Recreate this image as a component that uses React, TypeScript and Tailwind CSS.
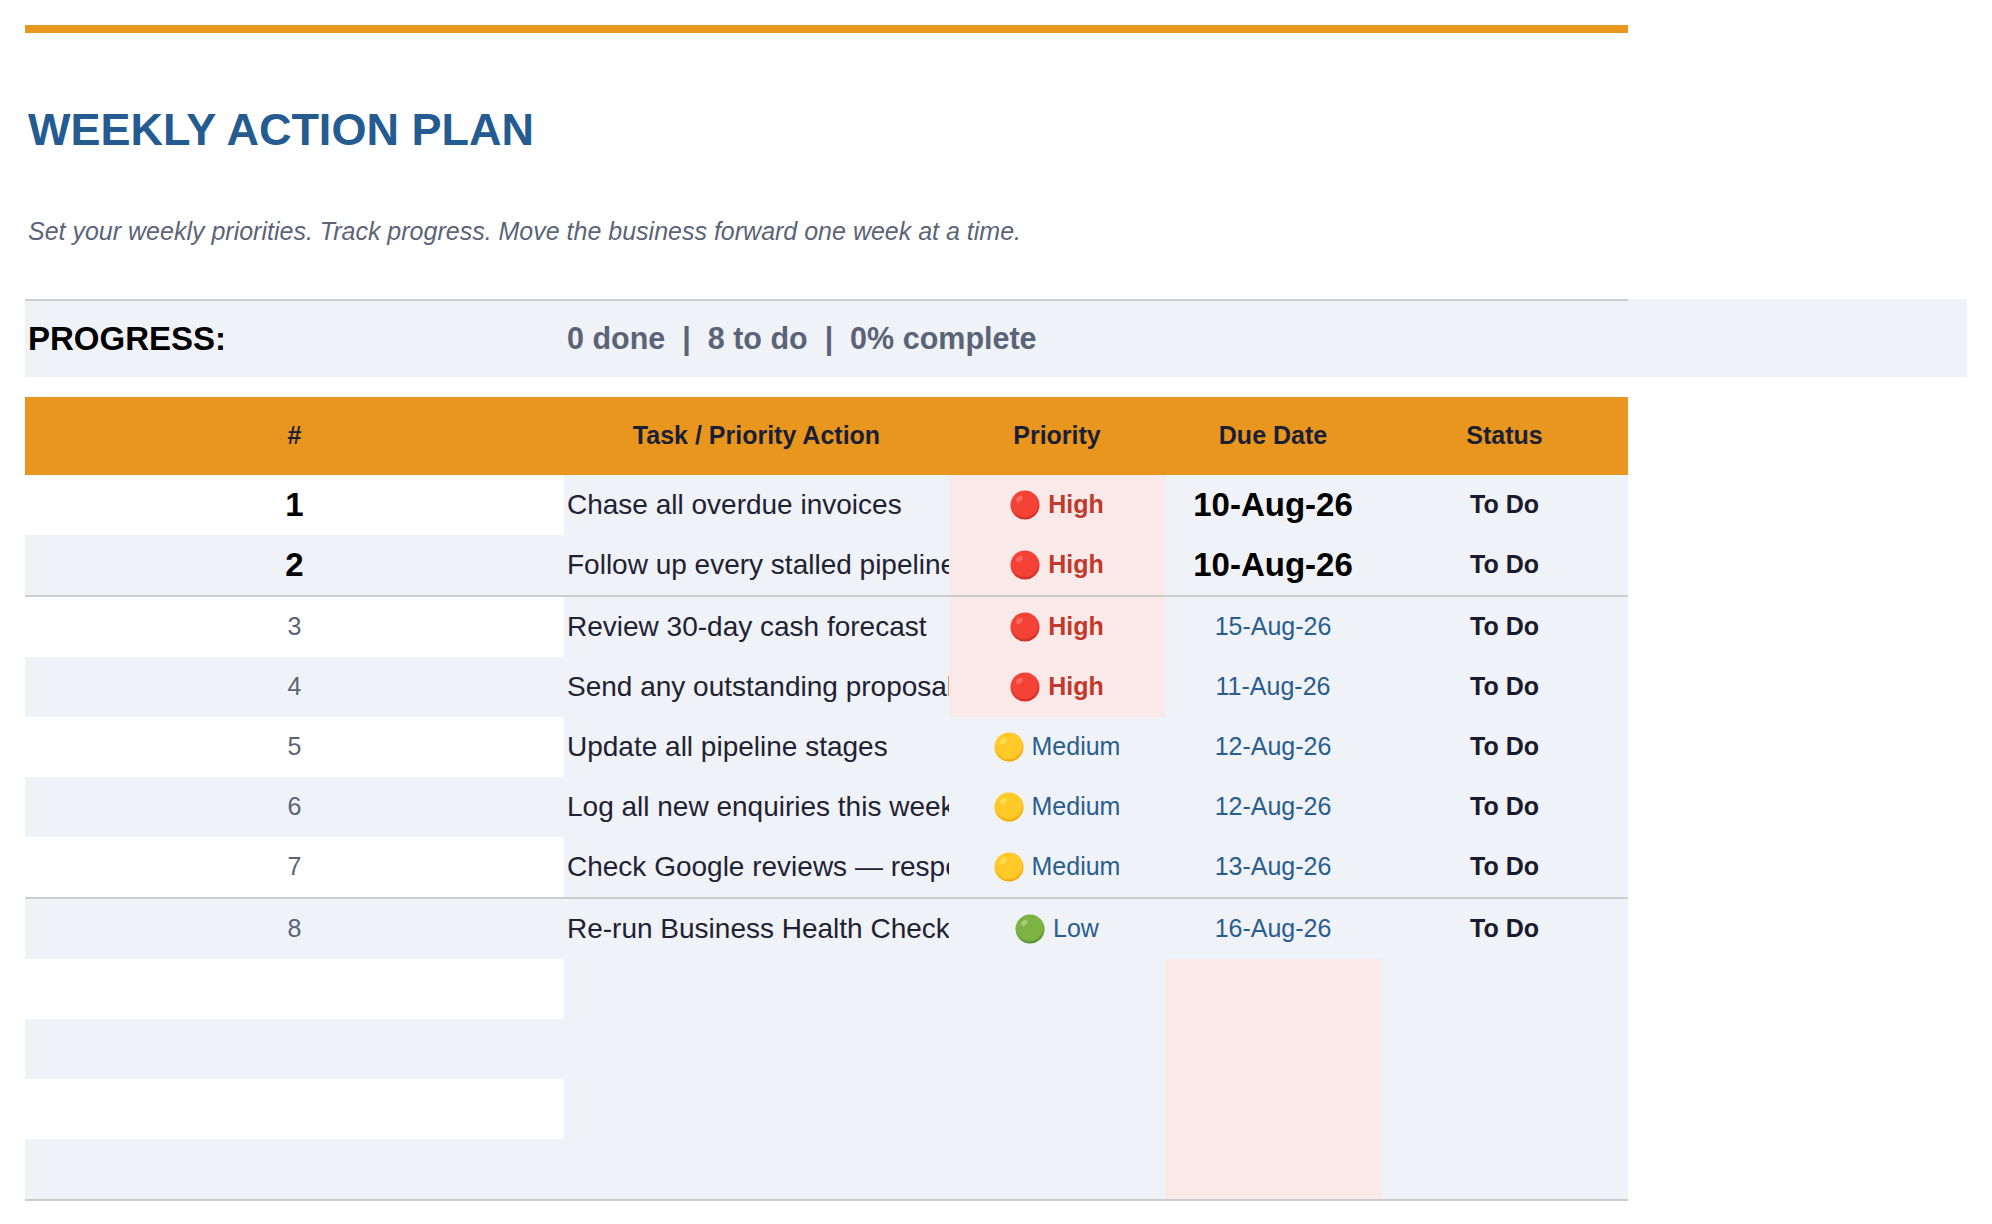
import React from "react";

type Level = "High" | "Medium" | "Low";

const DOT: Record<Level, { id: string; hi: string; base: string; dark: string }> = {
  High: { id: "dot-red", hi: "#FF8A80", base: "#F44336", dark: "#C62828" },
  Medium: { id: "dot-yellow", hi: "#FFF176", base: "#FFCA28", dark: "#F29E00" },
  Low: { id: "dot-green", hi: "#C5E1A5", base: "#7CB342", dark: "#4E8A2A" },
};

function Dot({ level }: { level: Level }) {
  const d = DOT[level];
  return (
    <svg width="30" height="30" viewBox="0 0 32 32" className="shrink-0">
      <defs>
        <radialGradient id={d.id} cx="48%" cy="42%" r="58%">
          <stop offset="0%" stopColor={d.base} />
          <stop offset="78%" stopColor={d.base} />
          <stop offset="100%" stopColor={d.dark} />
        </radialGradient>
      </defs>
      <circle cx="16" cy="16" r="15.5" fill={`url(#${d.id})`} />
      <ellipse cx="10" cy="9.5" rx="4" ry="2.6" fill={d.hi} opacity="0.55" transform="rotate(-40 10 9.5)" />
    </svg>
  );
}

type Row = { n: number; task: string; level: Level; date: string };

const rows: Row[] = [
  { n: 1, task: "Chase all overdue invoices", level: "High", date: "10-Aug-26" },
  { n: 2, task: "Follow up every stalled pipeline deal", level: "High", date: "10-Aug-26" },
  { n: 3, task: "Review 30-day cash forecast", level: "High", date: "15-Aug-26" },
  { n: 4, task: "Send any outstanding proposals", level: "High", date: "11-Aug-26" },
  { n: 5, task: "Update all pipeline stages", level: "Medium", date: "12-Aug-26" },
  { n: 6, task: "Log all new enquiries this week", level: "Medium", date: "12-Aug-26" },
  { n: 7, task: "Check Google reviews — respond to all", level: "Medium", date: "13-Aug-26" },
  { n: 8, task: "Re-run Business Health Check", level: "Low", date: "16-Aug-26" },
];

const GRID = "grid grid-cols-[539px_385px_216px_216px_247px]";

export default function App() {
  return (
    <div className="min-h-screen bg-white font-['Liberation_Sans',Arial,sans-serif]">
      <div className="pl-[25px] pt-[25px]">
        <div className="h-[8px] w-[1603px] bg-[#E8961E]" />
        <h1 className="mt-[75px] pl-[3px] text-[45px] leading-[44px] font-bold text-[#245C91]">
          WEEKLY ACTION PLAN
        </h1>
        <p className="mt-[67px] pl-[3px] text-[25px] leading-[25px] italic text-[#5B6477]">
          Set your weekly priorities. Track progress. Move the business forward one week at a time.
        </p>

        {/* Progress band */}
        <div className="mt-[55px] flex">
          <div className="flex h-[78px] w-[1603px] items-center border-t-2 border-[#CCCCCC] bg-[#EFF2F7]">
            <div className="w-[539px] pl-[3px] text-[33px] font-bold text-black">PROGRESS:</div>
            <div className="whitespace-pre pl-[3px] text-[30.5px] font-bold text-[#5B6477]">
              {"0 done  |  8 to do  |  0% complete"}
            </div>
          </div>
          <div className="h-[78px] w-[339px] bg-[#EFF2F7]" />
        </div>

        {/* Table */}
        <div className="mt-[20px] w-[1603px]">
          <div className={`${GRID} h-[78px] items-center bg-[#E8961E] text-[25px] font-bold text-[#1B1F36]`}>
            <div className="text-center">#</div>
            <div className="text-center">Task / Priority Action</div>
            <div className="text-center">Priority</div>
            <div className="text-center">Due Date</div>
            <div className="text-center">Status</div>
          </div>

          {rows.map((r, i) => {
            const bold = i < 2;
            const border = i === 1 || i === 6;
            return (
              <div
                key={r.n}
                className={`${GRID} h-[60px] ${border ? "box-content border-b-2 border-[#CCCCCC]" : ""}`}
              >
                <div
                  className={`flex items-center justify-center ${i % 2 === 0 ? "bg-white" : "bg-[#EFF2F7]"} ${
                    bold ? "text-[33px] font-bold text-black" : "text-[25px] text-[#5B6477]"
                  }`}
                >
                  {r.n}
                </div>
                <div className="flex items-center overflow-hidden whitespace-nowrap bg-[#EFF2F7] pl-[3px] text-[28px] text-[#1F2233]">
                  {r.task}
                </div>
                <div
                  className={`flex items-center justify-center gap-[8px] ${
                    r.level === "High" ? "bg-[#FAE9E9]" : "bg-[#EFF2F7]"
                  } text-[25px]`}
                >
                  <Dot level={r.level} />
                  <span
                    className={
                      r.level === "High" ? "font-bold text-[#C0392B]" : "text-[#2A5D8F]"
                    }
                  >
                    {r.level}
                  </span>
                </div>
                <div
                  className={`flex items-center justify-center bg-[#EFF2F7] ${
                    bold ? "text-[33px] font-bold text-black" : "text-[25px] text-[#2A5D8F]"
                  }`}
                >
                  {r.date}
                </div>
                <div className="flex items-center justify-center bg-[#EFF2F7] text-[25px] font-bold text-[#1A1A2E]">
                  To Do
                </div>
              </div>
            );
          })}

          {[0, 1, 2, 3].map((k) => (
            <div
              key={`e${k}`}
              className={`${GRID} h-[60px] ${k === 3 ? "box-content border-b-2 border-[#CCCCCC]" : ""}`}
            >
              <div className={k % 2 === 0 ? "bg-white" : "bg-[#EFF2F7]"} />
              <div className="bg-[#EFF2F7]" />
              <div className="bg-[#EFF2F7]" />
              <div className="bg-[#FAE9E9]" />
              <div className="bg-[#EFF2F7]" />
            </div>
          ))}
        </div>
      </div>
    </div>
  );
}
